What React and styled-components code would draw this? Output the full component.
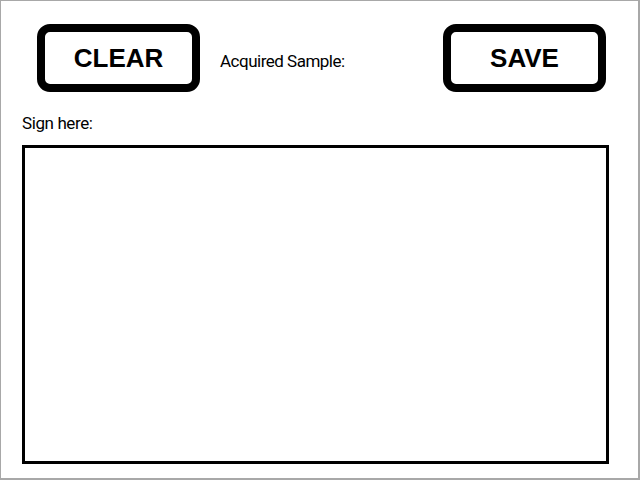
import React from "react";
import styled, { createGlobalStyle } from "styled-components";

const GlobalStyle = createGlobalStyle`
  html, body {
    margin: 0;
    padding: 0;
    background: #ffffff;
  }
  * {
    box-sizing: border-box;
  }
`;

const Frame = styled.div`
  width: 640px;
  height: 480px;
  background: #ffffff;
  border-style: solid;
  border-color: #a8a8a8;
  border-width: 1px 2px 2px 1px;
  display: flex;
  flex-direction: column;
  font-family: Roboto, "Liberation Sans", sans-serif;
  color: #000;
`;

const Toolbar = styled.div`
  display: flex;
  align-items: center;
  height: 68px;
  margin-top: 23px;
  padding: 0 32px 0 36px;
`;

const Button = styled.button`
  width: 163px;
  height: 68px;
  border: 8px solid #000;
  border-radius: 13px;
  background: #fff;
  font-family: "Liberation Sans", Arial, sans-serif;
  font-weight: 700;
  font-size: 26px;
  color: #000;
  padding: 0;
  cursor: pointer;
  margin-left: ${({ $push }) => ($push ? "auto" : "0")};
`;

const Acquired = styled.span`
  margin-left: 20px;
  padding-top: 6px;
  font-size: 17px;
  letter-spacing: -0.5px;
`;

const SignArea = styled.div`
  display: flex;
  flex-direction: column;
  padding-left: 21px;
  margin-top: 22px;
`;

const SignLabel = styled.div`
  font-size: 17px;
  letter-spacing: -0.4px;
  line-height: 19px;
  margin-bottom: 12px;
`;

const Pad = styled.div`
  width: 587px;
  height: 319px;
  border: 3px solid #000;
  background: #fff;
`;

export default function App() {
  return (
    <>
      <GlobalStyle />
      <Frame>
        <Toolbar>
          <Button>CLEAR</Button>
          <Acquired>Acquired Sample:</Acquired>
          <Button $push>SAVE</Button>
        </Toolbar>
        <SignArea>
          <SignLabel>Sign here:</SignLabel>
          <Pad />
        </SignArea>
      </Frame>
    </>
  );
}
